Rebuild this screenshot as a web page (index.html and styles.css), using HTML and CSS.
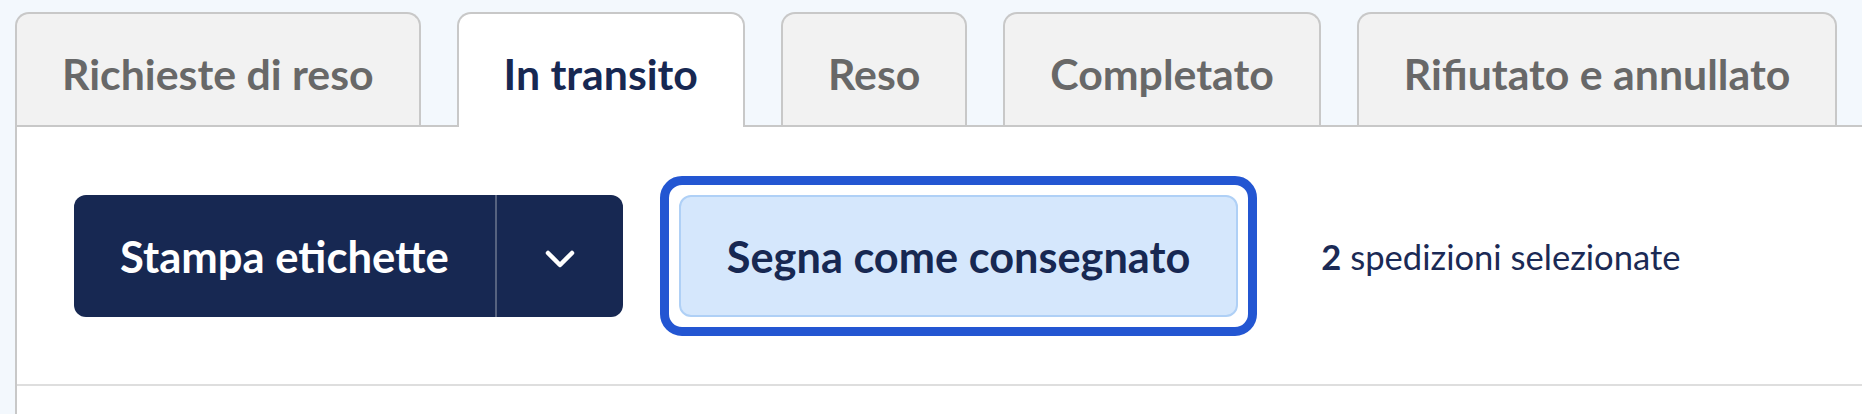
FILE: index.html
```html
<!DOCTYPE html>
<html lang="it">
<head>
    <meta charset="UTF-8">
    <meta name="viewport" content="width=device-width, initial-scale=1.0">
    <title>Resi - In transito</title>
    <link rel="stylesheet" href="styles.css">
</head>
<body>
    <nav class="tabs">
        <a class="tab" href="#">Richieste di reso</a>
        <a class="tab active" href="#">In transito</a>
        <a class="tab" href="#">Reso</a>
        <a class="tab" href="#">Completato</a>
        <a class="tab" href="#">Rifiutato e annullato</a>
    </nav>
    <section class="panel">
        <div class="toolbar">
            <div class="split-btn">
                <button class="btn-main">Stampa etichette</button>
                <button class="btn-toggle" aria-label="Altre opzioni">
                    <svg width="30" height="18" viewBox="0 0 30 18" fill="none">
                        <path d="M3 3 L15 15 L27 3" stroke="#fff" stroke-width="4.5" stroke-linecap="round" stroke-linejoin="round"/>
                    </svg>
                </button>
            </div>
            <button class="btn-secondary">Segna come consegnato</button>
            <p class="selection"><strong>2</strong> spedizioni selezionate</p>
        </div>
    </section>
</body>
</html>
```

FILE: styles.css
```css
/* General */
body {
    margin: 0;
    padding: 0;
    font-family: Lato, "Noto Sans", sans-serif;
    background: #f3f8fd;
    min-height: 414px;
}

/* Tabs */
.tabs {
    display: flex;
    gap: 36px;
    padding: 12px 0 0 15px;
    position: relative;
    z-index: 1;
    align-items: flex-start;
}

.tab {
    display: flex;
    align-items: center;
    box-sizing: border-box;
    height: 113px;
    padding: 8px 45px 0;
    background: #f2f2f2;
    border: 2px solid #c8c8c8;
    border-bottom: none;
    border-radius: 14px 14px 0 0;
    color: #686868;
    font-size: 42.8px;
    font-weight: 700;
    text-decoration: none;
    white-space: nowrap;
}

.tab.active {
    height: 115px;
    padding-bottom: 2px;
    background: #ffffff;
    color: #172852;
}

/* Panel */
.panel {
    margin: -2px 0 0 15px;
    background: #ffffff;
    border-top: 2px solid #c8c8c8;
    border-left: 2px solid #c8c8c8;
    height: 300px;
}

.toolbar {
    display: flex;
    align-items: center;
    padding: 68px 0 67px 57px;
    border-bottom: 2px solid #dedede;
}

/* Split button */
.split-btn {
    display: flex;
    height: 122px;
    background: #172852;
    border-radius: 12px;
}

.split-btn button {
    background: none;
    border: none;
    color: #ffffff;
    font-family: inherit;
    font-size: 43.6px;
    font-weight: 700;
    cursor: pointer;
}

.btn-main {
    padding: 0 46px;
    border-right: 2px solid #56627f !important;
}

.btn-toggle {
    width: 126px;
    display: flex;
    align-items: center;
    justify-content: center;
    padding: 6px 0 0;
}

/* Secondary button with focus ring */
.btn-secondary {
    position: relative;
    margin-left: 56px;
    height: 122px;
    padding: 0 46px;
    background: #d5e7fc;
    border: 2px solid #afd0f6;
    border-radius: 12px;
    color: #172852;
    font-family: inherit;
    font-size: 43.3px;
    font-weight: 700;
    cursor: pointer;
}

.btn-secondary::after {
    content: '';
    position: absolute;
    top: -21px;
    left: -21px;
    right: -21px;
    bottom: -21px;
    border: 9px solid #2356d2;
    border-radius: 22px;
}

.selection {
    margin: 0 0 0 83px;
    color: #1b2a55;
    font-size: 34.6px;
}

.selection strong {
    font-weight: 700;
}
```
